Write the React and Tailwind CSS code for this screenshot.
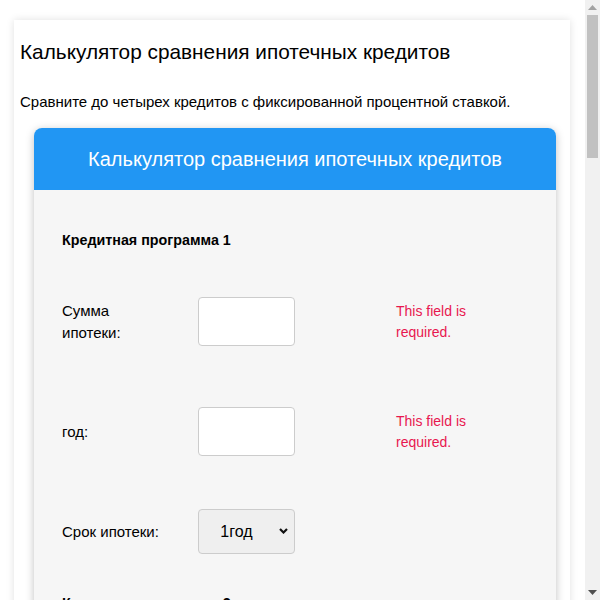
import React from 'react';

const font = { fontFamily: '"Liberation Sans", Arial, sans-serif' };

const Row = ({ label, error, children, className = '' }) => (
  <div className={`grid grid-cols-[136px_97px_101px_1fr] items-center ${className}`}>
    <div className="text-[15px] leading-[22px] text-black pr-4">{label}</div>
    <div>{children}</div>
    <div />
    <div className="text-[14px] leading-[21px] text-[#e8174f] w-[80px]">{error}</div>
  </div>
);

const TextInput = () => (
  <input
    type="text"
    className="block w-[97px] h-[49px] bg-white border border-[#cccccc] rounded-[4px] outline-none"
  />
);

const TermSelect = () => (
  <div className="relative w-[97px] h-[45px]">
    <select className="appearance-none w-full h-full bg-[#efefef] border border-[#cccccc] rounded-[4px] text-[16px] text-black text-center pr-[20px] outline-none">
      <option>1год</option>
      <option>5лет</option>
      <option>10лет</option>
      <option>15лет</option>
      <option>20лет</option>
      <option>30лет</option>
    </select>
    <svg className="absolute right-[7px] top-[19px] pointer-events-none" width="9" height="6" viewBox="0 0 9 6">
      <path d="M1 1l3.5 3.5L8 1" fill="none" stroke="#111" strokeWidth="2.2" />
    </svg>
  </div>
);

const Program = ({ n, errors }) => (
  <div className="pb-[40px]">
    <h3 className="text-[14.3px] font-bold leading-[18px] text-black">Кредитная программа {n}</h3>
    <Row
      className="mt-[48px]"
      label={<>Сумма<br />ипотеки:</>}
      error={errors ? 'This field is required.' : ''}
    >
      <TextInput />
    </Row>
    <Row className="mt-[61px]" label="год:" error={errors ? 'This field is required.' : ''}>
      <TextInput />
    </Row>
    <Row className="mt-[53px]" label="Срок ипотеки:">
      <TermSelect />
    </Row>
  </div>
);

const Scrollbar = () => (
  <div className="w-[15px] h-full bg-[#f1f1f1] flex flex-col items-center shrink-0">
    <div className="h-[15px] flex items-center justify-center">
      <svg width="9" height="5" viewBox="0 0 9 5"><path d="M4.5 0L9 5H0z" fill="#a3a3a3" /></svg>
    </div>
    <div className="w-[11px] h-[143px] bg-[#c1c1c1]" />
    <div className="flex-1" />
    <div className="h-[15px] flex items-center justify-center">
      <svg width="9" height="5" viewBox="0 0 9 5"><path d="M0 0h9L4.5 5z" fill="#505050" /></svg>
    </div>
  </div>
);

export default function App() {
  return (
    <div className="h-[600px] flex bg-white overflow-hidden" style={font}>
      <div className="flex-1 overflow-hidden pt-[20px] pl-[14px]">
        <div className="w-[556px] bg-white shadow-[0_0_8px_rgba(0,0,0,0.12)] px-[6px] pb-[30px]">
          <h1 className="pt-[20px] text-[20.8px] leading-[24px] text-black">
            Калькулятор сравнения ипотечных кредитов
          </h1>
          <p className="mt-[28px] text-[15px] leading-[20px] text-black">
            Сравните до четырех кредитов с фиксированной процентной ставкой.
          </p>
          <div className="mt-[16px] ml-[14px] w-[522px] rounded-t-[8px] overflow-hidden shadow-[0_2px_8px_rgba(0,0,0,0.25)]">
            <div className="h-[62px] bg-[#2196f3] flex items-center justify-center">
              <h2 className="text-[20px] text-white">Калькулятор сравнения ипотечных кредитов</h2>
            </div>
            <div className="bg-[#f6f6f6] pl-[28px] pr-[20px] pt-[41px] pb-[30px]">
              <Program n={1} errors />
              <Program n={2} />
              <Program n={3} />
              <Program n={4} />
              <div className="flex justify-center pt-[10px]">
                <button className="bg-[#2196f3] text-white text-[16px] px-6 py-3 rounded-[4px]">
                  Сравнить
                </button>
              </div>
            </div>
          </div>
        </div>
      </div>
      <Scrollbar />
    </div>
  );
}
